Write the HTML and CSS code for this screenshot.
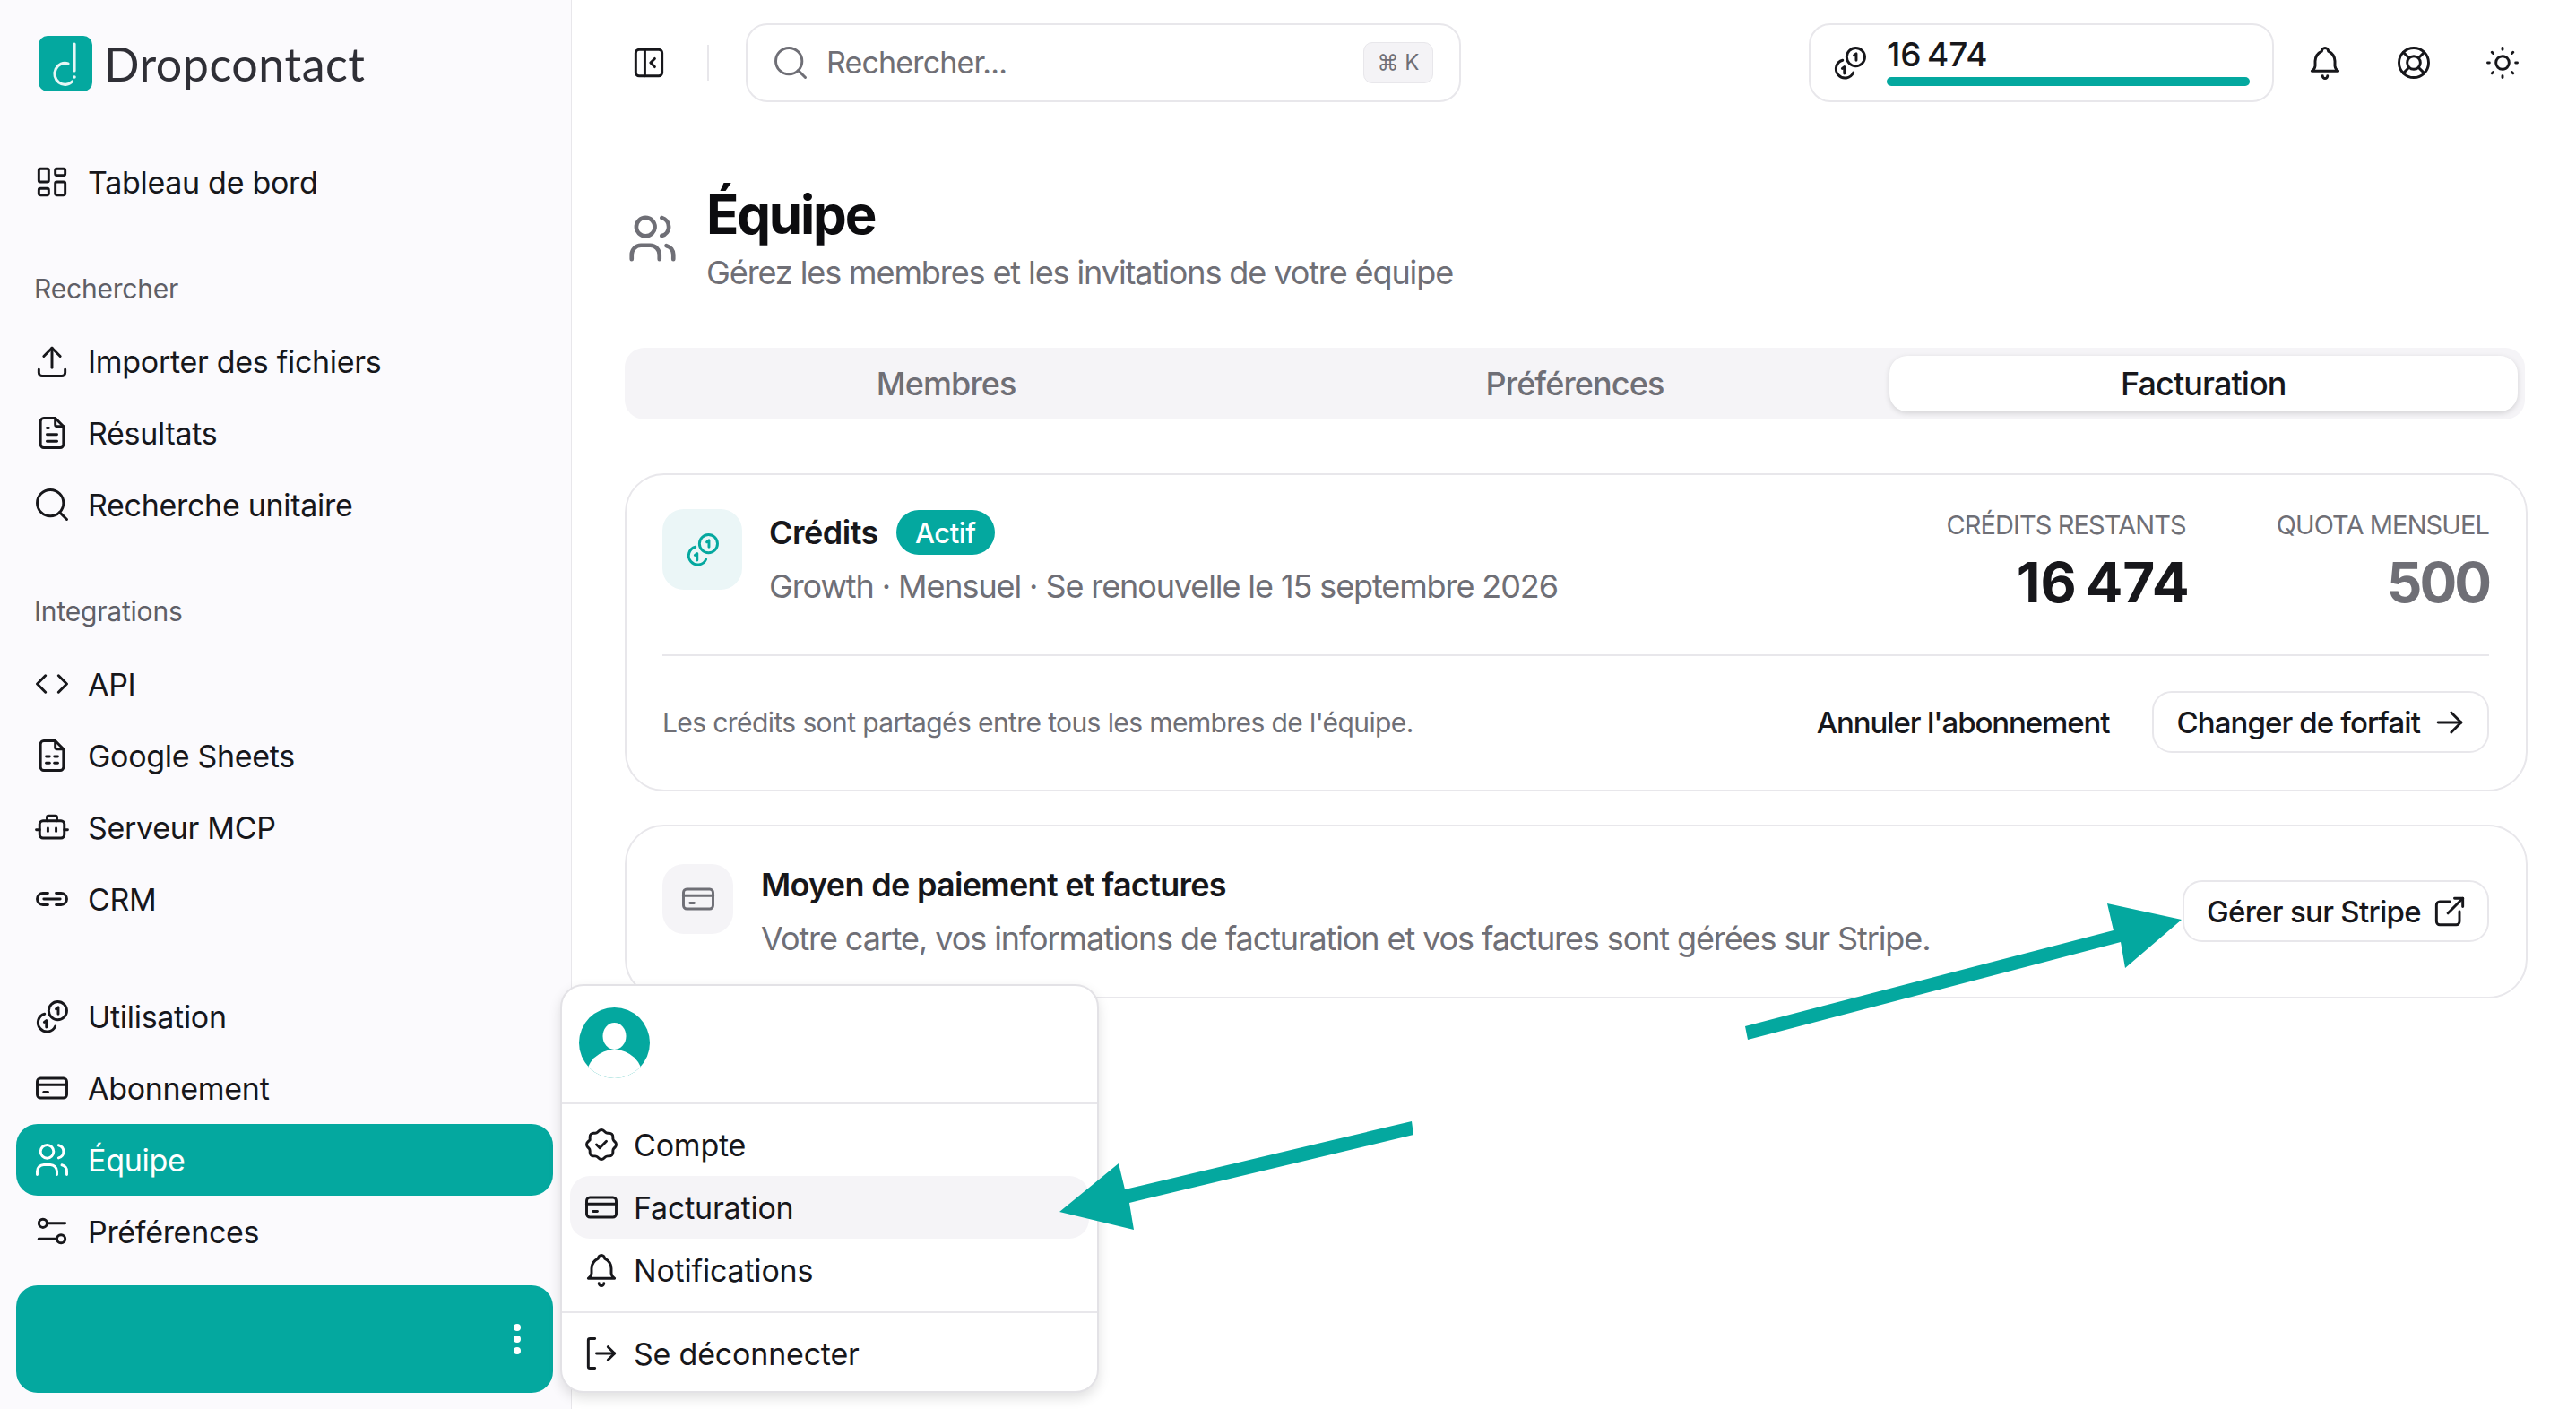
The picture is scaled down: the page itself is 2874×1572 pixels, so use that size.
FILE: index.html

```html
<!DOCTYPE html>
<html lang="fr">
<head>
  <meta charset="UTF-8">
  <title>Dropcontact - Équipe</title>
  <link rel="stylesheet" href="styles.css">
</head>
<body>
  <svg class="sprite" xmlns="http://www.w3.org/2000/svg">
    <symbol id="i-dashboard" viewBox="0 0 24 24"><path d="M5 4h4a1 1 0 0 1 1 1v6a1 1 0 0 1-1 1H5a1 1 0 0 1-1-1V5a1 1 0 0 1 1-1"/><path d="M5 16h4a1 1 0 0 1 1 1v2a1 1 0 0 1-1 1H5a1 1 0 0 1-1-1v-2a1 1 0 0 1 1-1"/><path d="M15 12h4a1 1 0 0 1 1 1v6a1 1 0 0 1-1 1h-4a1 1 0 0 1-1-1v-6a1 1 0 0 1 1-1"/><path d="M15 4h4a1 1 0 0 1 1 1v2a1 1 0 0 1-1 1h-4a1 1 0 0 1-1-1V5a1 1 0 0 1 1-1"/></symbol>
    <symbol id="i-upload" viewBox="0 0 24 24"><path d="M4 17v2a2 2 0 0 0 2 2h12a2 2 0 0 0 2-2v-2"/><path d="M7 9l5-5 5 5"/><path d="M12 4v12"/></symbol>
    <symbol id="i-file" viewBox="0 0 24 24"><path d="M14 3v4a1 1 0 0 0 1 1h4"/><path d="M17 21H7a2 2 0 0 1-2-2V5a2 2 0 0 1 2-2h7l5 5v11a2 2 0 0 1-2 2z"/><path d="M9 9h1"/><path d="M9 13h6"/><path d="M9 17h6"/></symbol>
    <symbol id="i-sheet" viewBox="0 0 24 24"><path d="M14 3v4a1 1 0 0 0 1 1h4"/><path d="M17 21H7a2 2 0 0 1-2-2V5a2 2 0 0 1 2-2h7l5 5v11a2 2 0 0 1-2 2z"/><path d="M8.500 12.500h2"/><path d="M13.500 12.500h2"/><path d="M8.500 16.500h2"/><path d="M13.500 16.500h2"/></symbol>
    <symbol id="i-search" viewBox="0 0 24 24"><circle cx="11" cy="11" r="8"/><path d="M21 21l-4.300-4.300"/></symbol>
    <symbol id="i-code" viewBox="0 0 24 24"><path d="M8 7l-5 5 5 5"/><path d="M16 7l5 5-5 5"/></symbol>
    <symbol id="i-robot" viewBox="0 0 24 24"><rect x="4.500" y="8" width="15" height="10.500" rx="2"/><path d="M9 8V6a1 1 0 0 1 1-1h4a1 1 0 0 1 1 1v2"/><path d="M2.500 13.500h2"/><path d="M19.500 13.500h2"/><path d="M9.500 12.500v2"/><path d="M14.500 12.500v2"/></symbol>
    <symbol id="i-link" viewBox="0 0 24 24"><path d="M9.500 8.500H6.500a3.500 3.500 0 0 0 0 7h3"/><path d="M14.500 8.500h3a3.500 3.500 0 0 1 0 7h-3"/><path d="M7 12h10"/></symbol>
    <symbol id="i-coins" viewBox="0 0 24 24"><circle cx="15.500" cy="8.500" r="5.500"/><path d="M14.500 7.500l1.300-1V10.500"/><path d="M7.500 10.500a5.500 5.500 0 1 0 6.500 7.500"/><path d="M7.300 15.500l1.300-1v4"/></symbol>
    <symbol id="i-card" viewBox="0 0 24 24"><rect x="3" y="6" width="18" height="12" rx="2"/><path d="M3 10h18"/><path d="M7 14.500h2.500"/></symbol>
    <symbol id="i-users" viewBox="0 0 24 24"><circle cx="9" cy="7" r="4"/><path d="M3 21v-2a4 4 0 0 1 4-4h4a4 4 0 0 1 4 4v2"/><path d="M16 3.130a4 4 0 0 1 0 7.750"/><path d="M21 21v-2a4 4 0 0 0-3-3.850"/></symbol>
    <symbol id="i-sliders" viewBox="0 0 24 24"><circle cx="6.500" cy="7" r="2.500"/><path d="M9 7h11"/><circle cx="17.500" cy="16.500" r="2.500"/><path d="M4 16.500h11"/></symbol>
    <symbol id="i-panel" viewBox="0 0 24 24"><rect x="4" y="4" width="16" height="16" rx="2"/><path d="M9.500 4v16"/><path d="M15.500 9.500l-2.500 2.500 2.500 2.500"/></symbol>
    <symbol id="i-bell" viewBox="0 0 24 24"><path d="M10 5a2 2 0 1 1 4 0 7 7 0 0 1 4 6v3a4 4 0 0 0 2 3H4a4 4 0 0 0 2-3v-3a7 7 0 0 1 4-6"/><path d="M10.500 20a1.500 1.500 0 0 0 3 0"/></symbol>
    <symbol id="i-help" viewBox="0 0 24 24"><circle cx="12" cy="12" r="4"/><circle cx="12" cy="12" r="9"/><path d="M15 15l3.350 3.350"/><path d="M9 15l-3.350 3.350"/><path d="M5.650 5.650L9 9"/><path d="M18.350 5.650L15 9"/></symbol>
    <symbol id="i-sun" viewBox="0 0 24 24"><circle cx="12" cy="12" r="4"/><path d="M3 12h1m8-9v1m8 8h1m-9 8v1M5.600 5.600l.7.7m12.100-.7l-.7.7m0 11.400l.7.7M6.300 17.700l-.7.7"/></symbol>
    <symbol id="i-arrow" viewBox="0 0 24 24"><path d="M5 12h14"/><path d="M13 18l6-6"/><path d="M13 6l6 6"/></symbol>
    <symbol id="i-external" viewBox="0 0 24 24"><path d="M12 6H6a2 2 0 0 0-2 2v10a2 2 0 0 0 2 2h10a2 2 0 0 0 2-2v-6"/><path d="M11 13l9-9"/><path d="M15 4h5v5"/></symbol>
    <symbol id="i-check" viewBox="0 0 24 24"><path d="M5 7.200A2.200 2.200 0 0 1 7.200 5h1a2.200 2.200 0 0 0 1.550-.64l.7-.7a2.200 2.200 0 0 1 3.120 0l.7.7c.41.41.97.64 1.550.64h1A2.200 2.200 0 0 1 19 7.200v1c0 .58.23 1.140.64 1.550l.7.7a2.200 2.200 0 0 1 0 3.120l-.7.7a2.200 2.200 0 0 0-.64 1.550v1a2.200 2.200 0 0 1-2.200 2.200h-1a2.200 2.200 0 0 0-1.550.64l-.7.7a2.200 2.200 0 0 1-3.120 0l-.7-.7a2.200 2.200 0 0 0-1.550-.64h-1A2.200 2.200 0 0 1 5 16.800v-1a2.200 2.200 0 0 0-.64-1.550l-.7-.7a2.200 2.200 0 0 1 0-3.120l.7-.7A2.200 2.200 0 0 0 5 9.200v-2"/><path d="M9 12l2 2 4-4"/></symbol>
    <symbol id="i-logout" viewBox="0 0 24 24"><path d="M8 3H5a1 1 0 0 0-1 1v16a1 1 0 0 0 1 1h3"/><path d="M9 12h11"/><path d="M16 8l4 4-4 4"/></symbol>
  </svg>

  <div class="app">
    <aside class="sidebar">
      <div class="brand">
        <svg class="brand-mark" viewBox="0 0 60 62">
          <rect width="60" height="62" rx="10" fill="#04a89f"/>
          <path d="M33 31a11.500 12 0 1 0 4.500 20" fill="none" stroke="#e6f6f5" stroke-width="3.200" stroke-linecap="round"/>
          <path d="M40 9v30" fill="none" stroke="#e6f6f5" stroke-width="3.200" stroke-linecap="round"/>
          <circle cx="40" cy="46" r="1.800" fill="#e6f6f5"/>
        </svg>
        <span class="brand-name">Dropcontact</span>
      </div>

      <nav class="nav">
        <a class="nav-item"><svg class="ic"><use href="#i-dashboard"/></svg>Tableau de bord</a>

        <div class="nav-label">Rechercher</div>
        <a class="nav-item"><svg class="ic"><use href="#i-upload"/></svg>Importer des fichiers</a>
        <a class="nav-item"><svg class="ic"><use href="#i-file"/></svg>Résultats</a>
        <a class="nav-item"><svg class="ic"><use href="#i-search"/></svg>Recherche unitaire</a>

        <div class="nav-label">Integrations</div>
        <a class="nav-item"><svg class="ic"><use href="#i-code"/></svg>API</a>
        <a class="nav-item"><svg class="ic"><use href="#i-sheet"/></svg>Google Sheets</a>
        <a class="nav-item"><svg class="ic"><use href="#i-robot"/></svg>Serveur MCP</a>
        <a class="nav-item"><svg class="ic"><use href="#i-link"/></svg>CRM</a>

        <a class="nav-item nav-gap"><svg class="ic"><use href="#i-coins"/></svg>Utilisation</a>
        <a class="nav-item"><svg class="ic"><use href="#i-card"/></svg>Abonnement</a>
        <a class="nav-item active"><svg class="ic"><use href="#i-users"/></svg>Équipe</a>
        <a class="nav-item"><svg class="ic"><use href="#i-sliders"/></svg>Préférences</a>
      </nav>

      <div class="user-box">
        <span class="kebab"><i></i><i></i><i></i></span>
      </div>
    </aside>

    <div class="main">
      <header class="topbar">
        <svg class="ic"><use href="#i-panel"/></svg>
        <span class="topbar-sep"></span>
        <div class="search">
          <svg class="ic search-ic"><use href="#i-search"/></svg>
          <span class="search-text">Rechercher...</span>
          <kbd class="kbd">⌘ K</kbd>
        </div>
        <div class="credit-box">
          <svg class="ic"><use href="#i-coins"/></svg>
          <div class="credit-meter">
            <div class="credit-num">16&#8239;474</div>
            <div class="credit-bar"></div>
          </div>
        </div>
        <svg class="ic top-ic"><use href="#i-bell"/></svg>
        <svg class="ic top-ic"><use href="#i-help"/></svg>
        <svg class="ic top-ic"><use href="#i-sun"/></svg>
      </header>

      <main class="content">
        <div class="page-head">
          <svg class="page-ic"><use href="#i-users"/></svg>
          <div>
            <h1>Équipe</h1>
            <p>Gérez les membres et les invitations de votre équipe</p>
          </div>
        </div>

        <div class="tabs">
          <div class="tab">Membres</div>
          <div class="tab">Préférences</div>
          <div class="tab active">Facturation</div>
        </div>

        <section class="card credits">
          <div class="credits-head">
            <div class="tile tile-teal"><svg class="ic"><use href="#i-coins"/></svg></div>
            <div class="credits-info">
              <div class="credits-title"><strong>Crédits</strong><span class="badge">Actif</span></div>
              <div class="muted">Growth · Mensuel · Se renouvelle le 15 septembre 2026</div>
            </div>
            <div class="stat stat-first">
              <div class="stat-label">Crédits restants</div>
              <div class="stat-value">16&#8239;474</div>
            </div>
            <div class="stat">
              <div class="stat-label">Quota mensuel</div>
              <div class="stat-value grey">500</div>
            </div>
          </div>
          <div class="credits-foot">
            <span class="note">Les crédits sont partagés entre tous les membres de l'équipe.</span>
            <a class="link">Annuler l'abonnement</a>
            <a class="btn">Changer de forfait<svg class="ic"><use href="#i-arrow"/></svg></a>
          </div>
        </section>

        <section class="card payment">
          <div class="tile tile-grey"><svg class="ic"><use href="#i-card"/></svg></div>
          <div class="payment-text">
            <strong>Moyen de paiement et factures</strong>
            <div class="muted">Votre carte, vos informations de facturation et vos factures sont gérées sur Stripe.</div>
          </div>
          <a class="btn btn-stripe">Gérer sur Stripe<svg class="ic"><use href="#i-external"/></svg></a>
        </section>
      </main>
    </div>
  </div>

  <div class="menu">
    <div class="menu-user">
      <svg class="avatar" viewBox="0 0 79 79">
        <defs><clipPath id="avatar-clip"><circle cx="39.500" cy="39.500" r="39.500"/></clipPath></defs>
        <g clip-path="url(#avatar-clip)">
          <rect width="79" height="79" fill="#04a89f"/>
          <ellipse cx="39.500" cy="32" rx="13" ry="15" fill="#fff"/>
          <circle cx="39.500" cy="79" r="32" fill="#fff"/>
        </g>
      </svg>
    </div>
    <div class="menu-group">
      <a class="menu-item"><svg class="ic"><use href="#i-check"/></svg>Compte</a>
      <a class="menu-item hover"><svg class="ic"><use href="#i-card"/></svg>Facturation</a>
      <a class="menu-item"><svg class="ic"><use href="#i-bell"/></svg>Notifications</a>
    </div>
    <div class="menu-group">
      <a class="menu-item"><svg class="ic"><use href="#i-logout"/></svg>Se déconnecter</a>
    </div>
  </div>

  <!-- arrows drawn over the screenshot -->
  <svg class="arrows" viewBox="0 0 2874 1572">
    <polygon points="1947,1145 2358,1038 2351,1008 2434,1026 2371,1080 2366,1051 1950,1160"/>
    <polygon points="1575,1251 1255,1327 1248,1298 1182,1352 1265,1372 1260,1342 1577,1266"/>
  </svg>
</body>
</html>
```

FILE: styles.css

```css
* {box-sizing: border-box;}
html, body {margin: 0; height: 100%;}
body {font-family: Inter, "Liberation Sans", sans-serif; font-size: 34px; color: #17171b; background: #fff; overflow: hidden;}
a {color: inherit; text-decoration: none;}
h1, p {margin: 0;}
.sprite {display: none;}

.ic {width: 44px; height: 44px; flex: none; fill: none; stroke: currentColor; stroke-width: 1.6; stroke-linecap: round; stroke-linejoin: round;}

.app {display: flex; height: 1572px;}

/* sidebar */
.sidebar {width: 638px; flex: none; background: #fbfafd; border-right: 1px solid #e8e7eb; display: flex; flex-direction: column;}
.brand {height: 163px; padding: 40px 0 0 43px; display: flex; align-items: flex-start; gap: 13px;}
.brand-mark {width: 60px; height: 62px; flex: none;}
.brand-name {font-family: Lato, sans-serif; font-size: 52px; line-height: 62px; color: #2f2f36; letter-spacing: 0.5px;}
.nav {display: flex; flex-direction: column;}
.nav-item {height: 80px; margin: 0 20px 0 18px; padding-left: 18px; border-radius: 24px; display: flex; align-items: center; gap: 18px; letter-spacing: -0.3px;}
.nav-item.active {background: #04a89f; color: #fff;}
.nav-gap {margin-top: 51px;}
.nav-label {height: 40px; line-height: 40px; margin: 59px 0 21px 38px; font-size: 30px; color: #5f5f67; letter-spacing: -0.2px;}
.user-box {height: 120px; margin: 20px 20px 0 18px; border-radius: 24px; background: #04a89f; display: flex; align-items: center; justify-content: flex-end; padding-right: 36px;}
.kebab {display: flex; flex-direction: column; gap: 5px;}
.kebab i {width: 8px; height: 8px; border-radius: 50%; background: #fff;}

/* top bar */
.main {flex: 1; min-width: 0;}
.topbar {height: 140px; border-bottom: 1px solid #e8e7eb; padding: 0 60px 0 64px; display: flex; align-items: center;}
.topbar-sep {width: 2px; height: 40px; background: #e8e7eb; margin: 0 41px 0 43px;}
.search {width: 798px; height: 88px; border: 2px solid #e8e7eb; border-radius: 24px; display: flex; align-items: center; padding: 0 29px 0 26px;}
.search-ic {color: #6f6f76;}
.search-text {margin-left: 18px; color: #6f6f76; flex: 1; letter-spacing: -0.85px;}
.kbd {width: 78px; height: 46px; border-radius: 10px; background: #f4f3f6; border: 1px solid #e8e7eb; font-family: Inter, sans-serif; font-size: 24px; color: #6f6f76; display: flex; align-items: center; justify-content: center;}
.credit-box {width: 519px; height: 88px; margin-left: auto; border: 2px solid #e8e7eb; border-radius: 24px; display: flex; align-items: center; gap: 19px; padding: 0 25px 0 22px;}
.credit-meter {flex: 1;}
.credit-num {font-size: 37px; line-height: 44px; font-weight: 500; margin-top: -4px;}
.credit-bar {height: 10px; border-radius: 5px; background: #04a89f; margin-top: 3px;}
.top-ic {margin-left: 55px;}
.credit-box + .top-ic {margin-left: 35px;}

/* content */
.content {padding: 64px 54px 0 59px;}
.page-head {display: flex; align-items: center; gap: 30px;}
.page-ic {width: 62px; height: 62px; fill: none; stroke: #6f6f76; stroke-width: 1.8; stroke-linecap: round; stroke-linejoin: round;}
.page-head h1 {font-size: 60px; line-height: 70px; font-weight: 700; letter-spacing: -2.2px; color: #0c0c0f; margin-left: -1px;}
.page-head p {margin-top: 6px; font-size: 36px; line-height: 48px; color: #6f6f76; letter-spacing: -1.1px; margin-left: -1px;}

.tabs {height: 80px; margin: 60px 3px 0 0; padding: 9px 8px; border-radius: 22px; background: #f5f4f7; display: grid; grid-template-columns: repeat(3, 1fr);}
.tab {border-radius: 20px; display: flex; align-items: center; justify-content: center; font-size: 36px; font-weight: 500; color: #6f6f76; letter-spacing: -0.9px;}
.tab.active {background: #fff; color: #17171b; box-shadow: 0 2px 6px rgba(0,0,0,0.14);}

.card {border: 2px solid #e8e7eb; border-radius: 44px; background: #fff;}
.credits {margin-top: 60px; height: 355px; padding: 38px 41px 0 40px;}
.credits-head {display: flex; height: 164px; border-bottom: 2px solid #e8e7eb;}
.tile {border-radius: 24px; display: flex; align-items: center; justify-content: center; flex: none;}
.tile-teal {width: 89px; height: 90px; background: #ebf6f7; color: #04a89f;}
.tile-grey {width: 79px; height: 78px; background: #f5f4f7; color: #6f6f76;}
.credits-info {margin-left: 30px; flex: 1;}
.credits-title {display: flex; align-items: center; gap: 20px; height: 50px; margin-top: 1px;}
.credits-title strong {font-size: 36px; font-weight: 600; letter-spacing: -0.5px;}
.badge {height: 50px; padding: 0 21px; border-radius: 25px; background: #04a89f; color: #fff; font-size: 31px; font-weight: 500; display: flex; align-items: center; letter-spacing: -0.4px;}
.muted {font-size: 36px; line-height: 48px; color: #6f6f76; letter-spacing: -1.1px;}
.credits-info .muted {margin-top: 11px;}
.stat {text-align: right;}
.stat-first {margin-right: 101px;}
.stat-label {font-size: 29px; line-height: 36px; color: #6f6f76; text-transform: uppercase; letter-spacing: -0.9px;}
.stat-value {font-size: 62px; line-height: 72px; margin: 10px -4px 0 0; font-weight: 700; letter-spacing: -0.5px;}
.stat-value.grey {margin-right: 0; color: #6f6f76; letter-spacing: -3px;}

.credits-foot {display: flex; align-items: center; margin-top: 39px;}
.note {font-size: 30px; color: #6f6f76; flex: 1; letter-spacing: -0.6px;}
.link {font-size: 33px; font-weight: 500; margin-right: 48px; letter-spacing: -1.1px;}
.btn {height: 69px; padding: 0 20px 0 25px; border: 2px solid #e8e7eb; border-radius: 22px; display: flex; align-items: center; gap: 11px; font-size: 33px; font-weight: 500; background: #fff; letter-spacing: -0.9px;}

.payment {margin-top: 37px; padding: 42px 41px 41px 40px; display: flex; align-items: flex-start;}
.payment-text {margin-left: 31px; flex: 1;}
.payment-text strong {display: block; font-size: 36px; line-height: 47px; font-weight: 600; letter-spacing: -0.7px;}
.payment-text .muted {margin-top: 12px;}
.btn-stripe {margin-top: 18px; flex: none; gap: 8px; padding-right: 20px; letter-spacing: -0.7px;}
.btn-stripe .ic {margin-left: 2px;}

/* user menu */
.menu {position: absolute; left: 625px; top: 1098px; width: 601px; height: 456px; background: #fff; border: 2px solid #e3e2e6; border-radius: 26px; box-shadow: 0 6px 14px rgba(0,0,0,0.12);}
.menu-user {height: 132px; padding: 24px 0 0 19px; border-bottom: 2px solid #e8e7eb;}
.avatar {width: 79px; height: 79px; display: block;}
.menu-group {padding: 10px 9px 11px; border-bottom: 2px solid #e8e7eb;}
.menu-group:last-child {border-bottom: none;}
.menu-item {height: 70px; padding-left: 13px; border-radius: 22px; display: flex; align-items: center; gap: 14px; letter-spacing: -0.2px;}
.menu-item.hover {background: #f5f4f7;}

.arrows {position: absolute; left: 0; top: 0; width: 2874px; height: 1572px; pointer-events: none;}
.arrows polygon {fill: #04a89f;}
```
